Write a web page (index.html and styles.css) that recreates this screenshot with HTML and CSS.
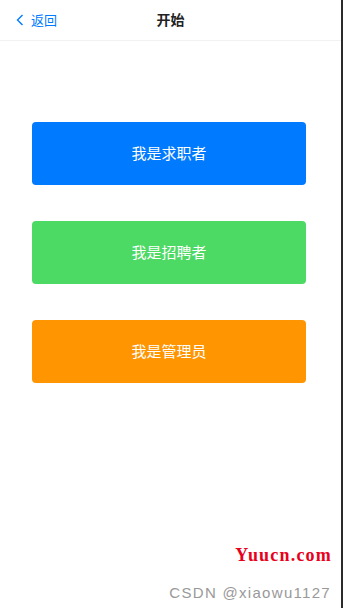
FILE: index.html
```html
<!DOCTYPE html>
<html lang="zh">
<head>
<meta charset="utf-8">
<link rel="stylesheet" href="styles.css">
</head>
<body>
<div class="frame">
  <div class="page">
    <header class="navbar">
      <a class="back">
        <svg class="chev" width="8" height="12" viewBox="0 0 8 12"><path d="M6.5 1 L1.5 6 L6.5 11" fill="none" stroke="#007aff" stroke-width="1.4"/></svg>
        <span>返回</span>
      </a>
      <div class="title">开始</div>
    </header>
    <main class="choices">
      <div class="btn blue">我是求职者</div>
      <div class="btn green">我是招聘者</div>
      <div class="btn orange">我是管理员</div>
    </main>
    <div class="marks">
      <div class="yuucn">Yuucn.com</div>
      <div class="csdn">CSDN @xiaowu1127</div>
    </div>
  </div>
  <div class="edge"></div>
</div>
</body>
</html>
```

FILE: styles.css
```css
html, body {
  margin: 0;
  padding: 0;
  background: #fff;
}
body {
  font-family: "Noto Sans CJK SC", "Liberation Sans", sans-serif;
}
.frame {
  display: flex;
  width: 343px;
  height: 608px;
}
.page {
  flex: 1;
  position: relative;
  display: flex;
  flex-direction: column;
}
.edge {
  width: 2px;
  background: #2b2b2b;
}
.navbar {
  position: relative;
  height: 41px;
  box-sizing: border-box;
  padding-bottom: 3px;
  border-bottom: 1px solid #f2f2f2;
  display: flex;
  align-items: center;
  justify-content: center;
}
.back {
  position: absolute;
  left: 16px;
  top: 0;
  height: 38px;
  display: flex;
  align-items: center;
  gap: 7px;
  color: #007aff;
  font-size: 13px;
}
.chev { display: block; margin-top: 1px; }
.title {
  font-size: 14px;
  font-weight: bold;
  color: #222;
}
.choices {
  display: flex;
  flex-direction: column;
  gap: 36px;
  padding: 81px 35px 0 32px;
}
.btn {
  height: 63px;
  box-sizing: border-box;
  padding-bottom: 3px;
  border-radius: 4px;
  display: flex;
  align-items: center;
  justify-content: center;
  color: #fff;
  font-size: 15px;
}
.blue { background: #007aff; }
.green { background: #4cd964; }
.orange { background: #ff9500; }
.marks {
  position: absolute;
  right: 10px;
  bottom: 7px;
  display: flex;
  flex-direction: column;
  align-items: flex-end;
}
.yuucn {
  font-family: "Liberation Serif", serif;
  font-weight: bold;
  font-size: 18px;
  letter-spacing: 1.2px;
  color: #e8001c;
  margin-right: -1px;
}
.csdn {
  margin-top: 18px;
  font-family: "Liberation Sans", sans-serif;
  font-size: 15px;
  letter-spacing: 1.3px;
  color: #999;
  margin-right: 0;
}
```
